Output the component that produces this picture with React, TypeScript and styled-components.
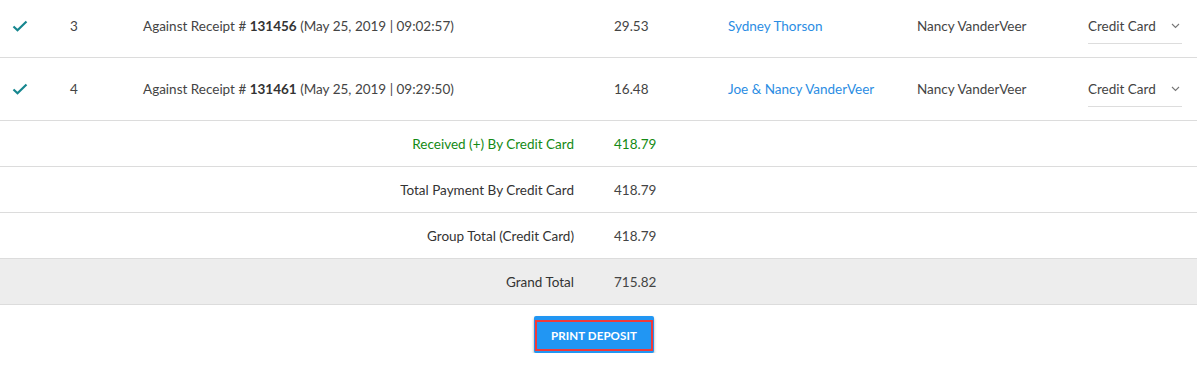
import React from "react";
import styled, { createGlobalStyle } from "styled-components";

const GlobalStyle = createGlobalStyle`
  html, body { margin: 0; padding: 0; background: #fff; }
  body { font-family: Lato, "Open Sans", sans-serif; font-size: 13.5px; color: #444; }
`;

const cols = "50px 73px 471px 114px 189px 171px 129px";

const Table = styled.div`
  width: 1197px;
  margin-top: -5px;
`;

const Row = styled.div<{ $h: number; $bg?: string }>`
  display: grid;
  grid-template-columns: ${cols};
  height: ${(p) => p.$h}px;
  align-items: center;
  border-bottom: 1px solid #dcdcdc;
  background: ${(p) => p.$bg || "#fff"};
`;

const Cell = styled.div<{ $color?: string }>`
  padding: 0 20px;
  white-space: nowrap;
  color: ${(p) => p.$color || "#444"};
`;

const CheckCell = styled.div`
  padding-left: 12px;
  display: flex;
  align-items: center;
`;

const Label = styled.div<{ $color?: string }>`
  grid-column: 1 / 4;
  text-align: right;
  padding-right: 20px;
  color: ${(p) => p.$color || "#333"};
`;

const Link = styled.a`
  color: #2b8de3;
  text-decoration: none;
`;

const Bold = styled.b`
  color: #333;
  font-weight: 700;
`;

const Select = styled.div`
  margin: 0 15px 0 20px;
  height: 36px;
  border-bottom: 1px solid #ddd;
  display: flex;
  align-items: center;
  justify-content: space-between;
  color: #444;
  box-sizing: border-box;
  padding-top: 1px;
  padding-right: 2px;
`;

const Footer = styled.div`
  display: flex;
  justify-content: center;
  padding: 11px 9px 0 0;
`;

const Button = styled.button`
  position: relative;
  background: #2196f3;
  color: #fff;
  border: none;
  font-family: inherit;
  font-weight: 700;
  font-size: 11.5px;
  height: 37px;
  width: 120px;
  padding: 2px 0 0;
  border-radius: 2px;
  box-shadow: 0 2px 3px rgba(0, 0, 0, 0.35);
  letter-spacing: 0.1px;

  &::after {
    content: "";
    position: absolute;
    top: 4px;
    left: 1px;
    right: 1px;
    bottom: 2px;
    border: 2px solid #f03a3a;
  }
`;

const Check = () => (
  <svg width="16" height="12" viewBox="0 0 16 12">
    <path d="M1.5 6.5 L5.5 10.2 L14.5 1.5" fill="none" stroke="#16868f" strokeWidth="2.2" />
  </svg>
);

const Chevron = () => (
  <svg width="9" height="6" viewBox="0 0 9 6">
    <path d="M1 1 L4.5 4.5 L8 1" fill="none" stroke="#777" strokeWidth="1.1" />
  </svg>
);

const rows = [
  { n: 3, r: "131456", d: "May 25, 2019 | 09:02:57", a: "29.53", c: "Sydney Thorson" },
  { n: 4, r: "131461", d: "May 25, 2019 | 09:29:50", a: "16.48", c: "Joe & Nancy VanderVeer" },
];

const summary = [
  { l: "Received (+) By Credit Card", v: "418.79", color: "#148a14" },
  { l: "Total Payment By Credit Card", v: "418.79" },
  { l: "Group Total (Credit Card)", v: "418.79" },
  { l: "Grand Total", v: "715.82", bg: "#ededed" },
];

export default function App() {
  return (
    <>
      <GlobalStyle />
      <Table>
        {rows.map((r) => (
          <Row key={r.n} $h={62}>
            <CheckCell><Check /></CheckCell>
            <Cell>{r.n}</Cell>
            <Cell>
              Against Receipt # <Bold>{r.r}</Bold> ({r.d})
            </Cell>
            <Cell>{r.a}</Cell>
            <Cell><Link href="#">{r.c}</Link></Cell>
            <Cell>Nancy VanderVeer</Cell>
            <Select>
              <span>Credit Card</span>
              <Chevron />
            </Select>
          </Row>
        ))}
        {summary.map((s) => (
          <Row key={s.l} $h={45} $bg={s.bg}>
            <Label $color={s.color}>{s.l}</Label>
            <Cell $color={s.color}>{s.v}</Cell>
          </Row>
        ))}
      </Table>
      <Footer>
        <Button>PRINT DEPOSIT</Button>
      </Footer>
    </>
  );
}
